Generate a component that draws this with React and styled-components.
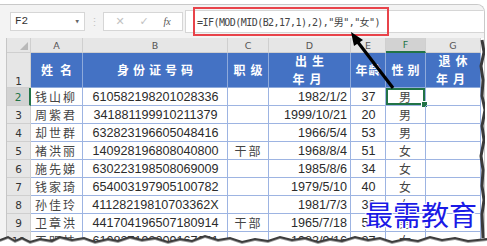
import React from 'react';
import styled, { createGlobalStyle, css } from 'styled-components';

const GlobalStyle = createGlobalStyle`
  body {
    margin: 0;
    background: #fff;
    font-family: "Noto Sans CJK SC", "Liberation Sans", sans-serif;
  }
`;

const rows = [
  { n: 2, name: '钱山柳', id: '610582198201028336', rank: '', date: '1982/1/2', age: '37', sex: '男' },
  { n: 3, name: '周紫君', id: '341881199910211379', rank: '', date: '1999/10/21', age: '20', sex: '男' },
  { n: 4, name: '却世群', id: '632823196605048416', rank: '', date: '1966/5/4', age: '53', sex: '男' },
  { n: 5, name: '褚洪丽', id: '140928196808040800', rank: '干部', date: '1968/8/4', age: '51', sex: '女' },
  { n: 6, name: '施先娣', id: '630223198508069009', rank: '', date: '1985/8/6', age: '34', sex: '女' },
  { n: 7, name: '钱家琦', id: '654003197905100782', rank: '', date: '1979/5/10', age: '40', sex: '女' },
  { n: 8, name: '孙佳玲', id: '41128219810703362X', rank: '', date: '1981/7/3', age: '38', sex: '女' },
  { n: 9, name: '卫章洪', id: '441704196507180914', rank: '干部', date: '1965/7/18', age: '54', sex: '男' },
  { n: 10, name: '王明桂', id: '610827198209167041', rank: '', date: '1982/9/16', age: '37', sex: '女' },
];

const letters = ['A', 'B', 'C', 'D', 'E', 'F', 'G'];

const titles = [
  { text: '姓名', gap: 7 },
  { text: '身份证号码', gap: 4 },
  { text: '职级', gap: 5 },
  { text: '出生\n年月', gap: 5 },
  { text: '年龄', gap: 1 },
  { text: '性别', gap: 4 },
  { text: '退休\n年月', gap: 5 },
];

// a jagged torn edge along the bottom of the shot
const tearPoints = [
  [0, 240], [8, 237], [15, 241], [22, 238], [30, 242], [40, 239], [52, 241], [60, 237],
  [72, 240], [84, 238], [95, 242], [108, 239], [118, 241], [130, 237], [142, 240],
  [155, 238], [168, 242], [180, 239], [192, 241], [205, 236], [218, 240], [230, 238],
  [242, 242], [255, 239], [268, 241], [280, 237], [292, 240], [305, 238], [318, 242],
  [330, 239], [342, 241], [355, 237], [368, 240], [380, 238], [392, 242], [405, 239],
  [418, 241], [430, 237], [442, 240], [455, 238], [468, 241], [487, 239],
];
const tearPath =
  'M0,246 ' + tearPoints.map(([x, y]) => `L${x},${y}`).join(' ') + ' L487,246 Z';
const tearLine = 'M' + tearPoints.map(([x, y]) => `${x},${y}`).join(' L');

const edgePoints = [
  [482, 40], [484, 52], [481, 66], [483, 80], [482, 96], [485, 110], [482, 126],
  [484, 140], [481, 156], [483, 170], [482, 186], [484, 200], [482, 214], [483, 238],
];
const edgeLine = 'M' + edgePoints.map(([x, y]) => `${x},${y}`).join(' L');

const App = () => {
  return (
    <>
      <GlobalStyle />
      <Shot>
        <Frame>
          <FormulaBar>
            <NameBox>
              <span>F2</span>
              <Caret>▾</Caret>
            </NameBox>
            <Grip>⋮</Grip>
            <FxGroup>
              <FxIcon>✕</FxIcon>
              <FxIcon>✓</FxIcon>
              <FxIcon $italic>fx</FxIcon>
            </FxGroup>
            <FormulaInput>
              <Highlight>=IF(MOD(MID(B2,17,1),2),"男","女")</Highlight>
            </FormulaInput>
          </FormulaBar>

          <Sheet>
            <Corner>
              <svg width="8" height="8" viewBox="0 0 8 8">
                <path d="M8 0 L8 8 L0 8 Z" fill="#b8b8b8" />
              </svg>
            </Corner>
            {letters.map((l) => (
              <ColHead key={l} $active={l === 'F'}>
                {l}
              </ColHead>
            ))}

            <RowHead $bottom>1</RowHead>
            {titles.map((t) => (
              <TitleCell key={t.text} $gap={t.gap}>
                {t.text}
              </TitleCell>
            ))}

            {rows.map((r) => (
              <React.Fragment key={r.n}>
                <RowHead $active={r.n === 2}>{r.n}</RowHead>
                <Cell $kind="name">{r.name}</Cell>
                <Cell $kind="num" $align="center">
                  {r.id}
                </Cell>
                <Cell $kind="name" $align="center">
                  {r.rank}
                </Cell>
                <Cell $kind="num" $align="right">
                  {r.date}
                </Cell>
                <Cell $kind="num" $align="center">
                  {r.age}
                </Cell>
                <Cell $kind="name" $align="center" $selected={r.n === 2}>
                  {r.sex}
                </Cell>
                <Cell />
              </React.Fragment>
            ))}
          </Sheet>
        </Frame>

        <Arrow width="487" height="246" viewBox="0 0 487 246">
          <line x1="393" y1="88" x2="357" y2="41" stroke="#000" strokeWidth="3.2" />
          <path d="M351,32 L363,40 L354,46 Z" fill="#000" />
        </Arrow>

        <Watermark>最需教育</Watermark>

        <Tear width="487" height="246" viewBox="0 0 487 246">
          <path d={edgeLine} stroke="#3a3a3a" strokeWidth="3" fill="none" />
          <path d="M485,30 L487,30 L487,246 L485,246 Z" fill="#fff" />
          <path d={tearLine} transform="translate(0,2)" stroke="#9a9a9a" strokeWidth="4" fill="none" />
          <path d={tearLine} stroke="#3c3c3c" strokeWidth="2" fill="none" />
          <path d={tearPath} transform="translate(0,2)" fill="#fff" />
        </Tear>
      </Shot>
    </>
  );
};

export default App;

const Shot = styled.div`
  position: relative;
  width: 487px;
  height: 246px;
  overflow: hidden;
  background: #fff;
`;

const Frame = styled.div`
  margin-top: 4px;
  width: 484px;
  border-top: 1px solid #c9c9c9;
  border-right: 1px solid #c9c9c9;
  border-top-right-radius: 8px;
  background: #f3f3f3;
  overflow: hidden;
`;

const FormulaBar = styled.div`
  height: 32px;
  display: flex;
  align-items: center;
  padding-left: 10px;
  background: #f3f3f3;
`;

const NameBox = styled.div`
  width: 75px;
  height: 19px;
  box-sizing: border-box;
  background: #fff;
  border: 1px solid #d6d6d6;
  display: flex;
  align-items: center;
  justify-content: space-between;
  padding: 0 4px;
  font-family: "Liberation Mono", monospace;
  font-size: 11px;
  color: #333;
`;

const Caret = styled.span`
  font-size: 9px;
  color: #666;
`;

const Grip = styled.div`
  width: 18px;
  text-align: center;
  color: #c4c4c4;
  font-size: 11px;
`;

const FxGroup = styled.div`
  width: 80px;
  height: 19px;
  box-sizing: border-box;
  background: #fff;
  border: 1px solid #d6d6d6;
  display: flex;
  align-items: center;
  justify-content: space-around;
  padding: 0 4px;
`;

const FxIcon = styled.span`
  font-size: ${(p) => (p.$italic ? '10px' : '11px')};
  color: ${(p) => (p.$italic ? '#555' : '#c2c2c2')};
  font-family: ${(p) => (p.$italic ? '"Liberation Serif", serif' : '"DejaVu Sans", sans-serif')};
  font-style: ${(p) => (p.$italic ? 'italic' : 'normal')};
`;

const FormulaInput = styled.div`
  flex: 1;
  height: 21px;
  margin-left: 2px;
  background: #fff;
  border: 1px solid #d6d6d6;
  border-right: none;
  display: flex;
  align-items: center;
`;

const Highlight = styled.span`
  margin-left: 7px;
  padding: 5px 7px 5px 2px;
  border: 2px solid #e8434a;
  font-family: "DejaVu Sans Mono", "Noto Sans CJK SC", monospace;
  font-size: 10px;
  letter-spacing: -0.55px;
  color: #444;
  white-space: pre;
`;

const Sheet = styled.div`
  margin-top: 1px;
  margin-left: 6px;
  display: grid;
  grid-template-columns: 24px 52px 145px 41px 82px 35px 40px 55px;
  grid-template-rows: 15px 35px repeat(9, 18px);
  background: #fff;
  border-left: 1px solid #c6c6c6;
`;

const headBase = css`
  box-sizing: border-box;
  background: #e6e6e6;
  border-right: 1px solid #cfcfcf;
  border-bottom: 1px solid #cfcfcf;
  color: #555;
  font-family: "DejaVu Sans", sans-serif;
`;

const Corner = styled.div`
  ${headBase};
  display: flex;
  align-items: flex-end;
  justify-content: flex-end;
  padding: 2px;
`;

const ColHead = styled.div`
  ${headBase};
  display: flex;
  align-items: center;
  justify-content: center;
  font-size: 9.5px;
  ${(p) =>
    p.$active &&
    css`
      background: #d2d2d2;
      color: #217346;
      border-bottom: 2px solid #217346;
    `}
`;

const RowHead = styled.div`
  ${headBase};
  display: flex;
  justify-content: center;
  align-items: ${(p) => (p.$bottom ? 'flex-end' : 'center')};
  font-size: 10.5px;
  color: #333;
  ${(p) =>
    p.$active &&
    css`
      background: #d2d2d2;
      color: #217346;
      border-right: 2px solid #217346;
    `}
`;

const TitleCell = styled.div`
  box-sizing: border-box;
  background: #4472c4;
  border-right: 1px solid #8eaadb;
  border-bottom: 1px solid #8eaadb;
  color: #fff;
  font-weight: 700;
  font-size: 12px;
  line-height: 18px;
  letter-spacing: ${(p) => p.$gap}px;
  text-indent: ${(p) => p.$gap}px;
  white-space: pre-line;
  display: flex;
  align-items: center;
  justify-content: center;
  text-align: center;
  overflow: hidden;
`;

const Cell = styled.div`
  position: relative;
  box-sizing: border-box;
  border-right: 1px solid #9db4e2;
  border-bottom: 1px solid #9db4e2;
  display: flex;
  align-items: center;
  justify-content: ${(p) =>
    p.$align === 'right' ? 'flex-end' : p.$align === 'center' ? 'center' : 'flex-start'};
  padding: 0 3px 0 4px;
  color: #2b2b2b;
  white-space: nowrap;
  overflow: hidden;
  ${(p) =>
    p.$kind === 'num'
      ? css`
          font-family: "Liberation Sans", sans-serif;
          font-size: 12.6px;
        `
      : css`
          font-family: "Noto Sans CJK SC", sans-serif;
          font-size: 12px;
          letter-spacing: 2px;
          color: #444;
        `}
  ${(p) =>
    p.$selected &&
    css`
      overflow: visible;
      box-shadow: inset 0 0 0 2px #217346;
      &::after {
        content: '';
        position: absolute;
        right: -3px;
        bottom: -3px;
        width: 5px;
        height: 5px;
        background: #217346;
        border: 1px solid #fff;
      }
    `}
`;

const Arrow = styled.svg`
  position: absolute;
  left: 0;
  top: 0;
  pointer-events: none;
`;

const Tear = styled.svg`
  position: absolute;
  left: 0;
  top: 0;
  pointer-events: none;
`;

const Watermark = styled.div`
  position: absolute;
  left: 365px;
  top: 194px;
  font-family: "Noto Sans CJK SC", sans-serif;
  font-size: 28px;
  font-weight: 400;
  color: #1a1ae6;
  text-shadow: 1px 1px 0 #fff, -1px -1px 0 #fff, 1px -1px 0 #fff, -1px 1px 0 #fff,
    0 0 3px #fff;
`;
